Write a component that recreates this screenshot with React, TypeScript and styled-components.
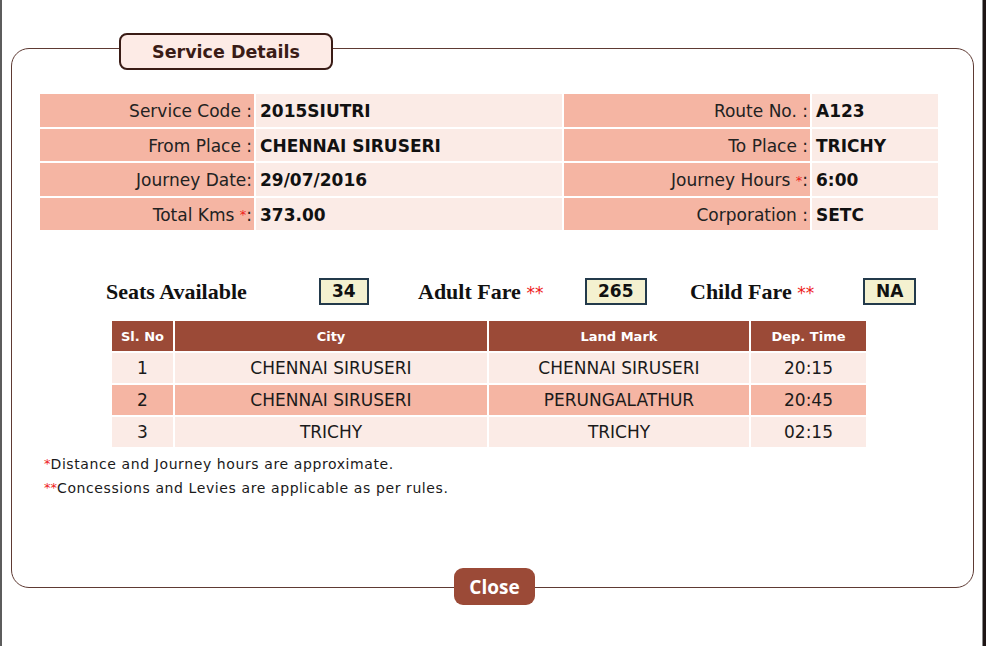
import React from 'react';
import styled, { createGlobalStyle } from 'styled-components';

const GlobalStyle = createGlobalStyle`
  html, body {
    margin: 0;
    padding: 0;
    background: #1e1515;
    font-family: "DejaVu Sans", Verdana, sans-serif;
  }
`;

const info = [
  { label: 'Service Code :', value: '2015SIUTRI', label2: 'Route No. :', value2: 'A123' },
  { label: 'From Place :', value: 'CHENNAI SIRUSERI', label2: 'To Place :', value2: 'TRICHY' },
  { label: 'Journey Date:', value: '29/07/2016', label2: 'Journey Hours ', star2: true, value2: '6:00' },
  { label: 'Total Kms ', star: true, value: '373.00', label2: 'Corporation :', value2: 'SETC' },
];

const stops = [
  { no: 1, city: 'CHENNAI SIRUSERI', mark: 'CHENNAI SIRUSERI', time: '20:15' },
  { no: 2, city: 'CHENNAI SIRUSERI', mark: 'PERUNGALATHUR', time: '20:45' },
  { no: 3, city: 'TRICHY', mark: 'TRICHY', time: '02:15' },
];

function App() {
  return (
    <>
      <GlobalStyle />
      <Window>
        <Frame>
          <Legend>Service Details</Legend>
          <Content>
            <InfoGrid>
              {info.map((r, i) => (
                <React.Fragment key={i}>
                  <LabelCell>
                    {r.label}
                    {r.star && (
                      <>
                        <Star $small>*</Star>:
                      </>
                    )}
                  </LabelCell>
                  <ValueCell>{r.value}</ValueCell>
                  <LabelCell>
                    {r.label2}
                    {r.star2 && (
                      <>
                        <Star $small>*</Star>:
                      </>
                    )}
                  </LabelCell>
                  <ValueCell>{r.value2}</ValueCell>
                </React.Fragment>
              ))}
            </InfoGrid>

            <FareRow>
              <FareLabel>Seats Available</FareLabel>
              <FareBox>34</FareBox>
              <FareLabel>
                Adult Fare <Star>**</Star>
              </FareLabel>
              <FareBox>265</FareBox>
              <FareLabel>
                Child Fare <Star>**</Star>
              </FareLabel>
              <FareBox>NA</FareBox>
            </FareRow>

            <StopsGrid>
              <HeadCell>Sl. No</HeadCell>
              <HeadCell>City</HeadCell>
              <HeadCell>Land Mark</HeadCell>
              <HeadCell>Dep. Time</HeadCell>
              {stops.map((s) => (
                <React.Fragment key={s.no}>
                  <StopCell $alt={s.no % 2 === 0}>{s.no}</StopCell>
                  <StopCell $alt={s.no % 2 === 0}>{s.city}</StopCell>
                  <StopCell $alt={s.no % 2 === 0}>{s.mark}</StopCell>
                  <StopCell $alt={s.no % 2 === 0}>{s.time}</StopCell>
                </React.Fragment>
              ))}
            </StopsGrid>

            <Notes>
              <Note>
                <Star $small>*</Star>Distance and Journey hours are approximate.
              </Note>
              <Note>
                <Star $small>**</Star>Concessions and Levies are applicable as per rules.
              </Note>
            </Notes>
          </Content>
        </Frame>
        <ButtonRow>
          <CloseButton>Close</CloseButton>
        </ButtonRow>
      </Window>
    </>
  );
}

const Window = styled.div`
  box-sizing: border-box;
  width: 983px;
  height: 646px;
  background: #fff;
  border-left: 2px solid #5c5c5c;
  border-right: 1px solid #8a8a8a;
  padding: 48px 0 0 9px;
`;

const Frame = styled.div`
  box-sizing: border-box;
  width: 963px;
  height: 540px;
  border: 1.5px solid #5e3a33;
  border-radius: 18px;
`;

const Legend = styled.div`
  box-sizing: border-box;
  width: 214px;
  height: 37px;
  margin: -16px 0 0 107px;
  background: #fdebe6;
  border: 2px solid #3a1c16;
  border-radius: 8px;
  display: flex;
  align-items: center;
  justify-content: center;
  font-weight: bold;
  font-size: 17.5px;
  color: #3a1c16;
`;

const Content = styled.div`
  width: 898px;
  margin: 24px 0 0 28px;
`;

const InfoGrid = styled.div`
  display: grid;
  grid-template-columns: 214px 306px 246px 126px;
  grid-auto-rows: 32.5px;
  gap: 2px;
`;

const LabelCell = styled.div`
  background: #f5b5a3;
  color: #222;
  font-size: 17px;
  display: flex;
  align-items: center;
  justify-content: flex-end;
  padding: 2px 2px 0 0;
  white-space: pre;
`;

const ValueCell = styled.div`
  background: #fbebe6;
  color: #111;
  font-size: 17px;
  font-weight: bold;
  display: flex;
  align-items: center;
  padding: 2px 0 0 4px;
`;

const Star = styled.span<{ $small?: boolean }>`
  color: #ee1c1c;
  font-size: ${(p) => (p.$small ? '13px' : '17px')};
  vertical-align: ${(p) => (p.$small ? 'top' : 'baseline')};
  font-family: "DejaVu Sans", sans-serif;
  font-weight: normal;
  letter-spacing: 0;
`;

const FareRow = styled.div`
  display: grid;
  grid-template-columns: 213px 99px 167px 105px 173px auto;
  align-items: center;
  height: 28px;
  margin: 47px 0 0 66px;
`;

const FareLabel = styled.div`
  font-family: "Liberation Serif", "Times New Roman", serif;
  font-weight: bold;
  font-size: 22px;
  color: #111;
  white-space: pre;
  padding-top: 2px;
`;

const FareBox = styled.div`
  justify-self: start;
  box-sizing: border-box;
  height: 27px;
  padding: 0 11px;
  background: #f4f1d0;
  border: 2px solid #233a4b;
  display: flex;
  align-items: center;
  font-weight: bold;
  font-size: 17px;
  color: #111;
`;

const StopsGrid = styled.div`
  display: grid;
  grid-template-columns: 61px 312px 260px 115px;
  grid-template-rows: 30px;
  grid-auto-rows: 30px;
  gap: 2px;
  margin: 16px 0 0 72px;
  width: 754px;
`;

const HeadCell = styled.div`
  background: #9b4a37;
  color: #fff;
  font-weight: bold;
  font-size: 13px;
  display: flex;
  align-items: center;
  justify-content: center;
`;

const StopCell = styled.div<{ $alt?: boolean }>`
  background: ${(p) => (p.$alt ? '#f5b5a3' : '#fbebe6')};
  color: #1a1a1a;
  font-size: 17px;
  display: flex;
  align-items: center;
  justify-content: center;
`;

const Notes = styled.div`
  margin: 5px 0 0 4px;
`;

const Note = styled.div`
  font-size: 14px;
  letter-spacing: 0.6px;
  line-height: 24px;
  color: #1a1a1a;
`;

const ButtonRow = styled.div`
  width: 963px;
  display: flex;
  justify-content: center;
  margin-top: -20px;
`;

const CloseButton = styled.button`
  width: 81px;
  height: 37px;
  margin-left: 4px;
  border: none;
  border-radius: 9px;
  background: #9b4a37;
  color: #fff;
  font-family: "Open Sans", sans-serif;
  font-weight: bold;
  font-size: 19px;
  cursor: pointer;
`;

export default App;
